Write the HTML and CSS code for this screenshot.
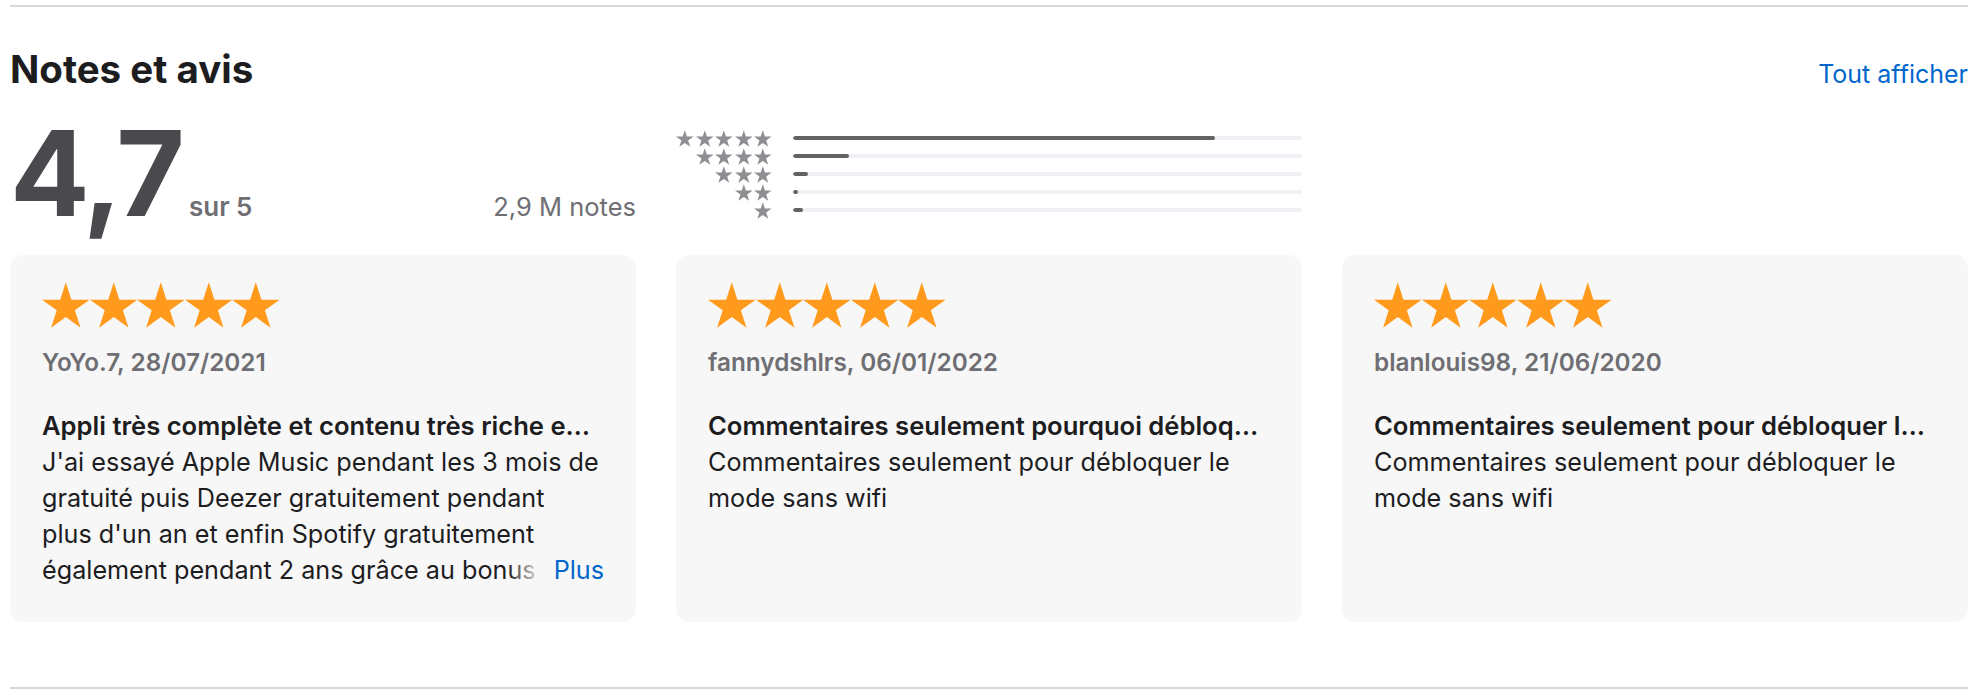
FILE: index.html
```html
<!DOCTYPE html>
<html lang="fr">
<head>
<meta charset="utf-8">
<title>Notes et avis</title>
<link rel="stylesheet" href="styles.css">
</head>
<body>
<svg class="defs" aria-hidden="true">
  <symbol id="star" viewBox="2.45 0 95.1 90.45"><polygon points="50,0 61.23,34.55 97.55,34.55 68.17,55.9 79.39,90.45 50,69.1 20.61,90.45 31.83,55.9 2.45,34.55 38.77,34.55"/></symbol>
</svg>
<section class="reviews">
  <header class="reviews-header">
    <h2 class="reviews-title">Notes et avis</h2>
    <a class="see-all" href="#">Tout afficher</a>
  </header>

  <div class="ratings">
    <div class="average">
      <span class="average-value">4,7</span>
      <span class="average-out">sur 5</span>
      <span class="average-count">2,9 M notes</span>
    </div>
    <div class="histogram">
      <div class="hist-row">
        <span class="hist-stars"><svg><use href="#star"/></svg><svg><use href="#star"/></svg><svg><use href="#star"/></svg><svg><use href="#star"/></svg><svg><use href="#star"/></svg></span>
        <span class="bar"><span class="fill" style="width:83%"></span></span>
      </div>
      <div class="hist-row">
        <span class="hist-stars"><svg><use href="#star"/></svg><svg><use href="#star"/></svg><svg><use href="#star"/></svg><svg><use href="#star"/></svg></span>
        <span class="bar"><span class="fill" style="width:11%"></span></span>
      </div>
      <div class="hist-row">
        <span class="hist-stars"><svg><use href="#star"/></svg><svg><use href="#star"/></svg><svg><use href="#star"/></svg></span>
        <span class="bar"><span class="fill" style="width:3%"></span></span>
      </div>
      <div class="hist-row">
        <span class="hist-stars"><svg><use href="#star"/></svg><svg><use href="#star"/></svg></span>
        <span class="bar"><span class="fill" style="width:1%"></span></span>
      </div>
      <div class="hist-row">
        <span class="hist-stars"><svg><use href="#star"/></svg></span>
        <span class="bar"><span class="fill" style="width:2%"></span></span>
      </div>
    </div>
  </div>

  <div class="cards">
    <article class="card">
      <div class="card-stars"><svg><use href="#star"/></svg><svg><use href="#star"/></svg><svg><use href="#star"/></svg><svg><use href="#star"/></svg><svg><use href="#star"/></svg></div>
      <div class="card-meta">YoYo.7, 28/07/2021</div>
      <h3 class="card-title">Appli très complète et contenu très riche en musique</h3>
      <p class="card-body">J'ai essayé Apple Music pendant les 3 mois de gratuité puis Deezer gratuitement pendant<br>plus d'un an et enfin Spotify gratuitement également pendant 2 ans grâce au bonus de mon opérateur.<a class="more" href="#">Plus</a></p>
    </article>
    <article class="card">
      <div class="card-stars"><svg><use href="#star"/></svg><svg><use href="#star"/></svg><svg><use href="#star"/></svg><svg><use href="#star"/></svg><svg><use href="#star"/></svg></div>
      <div class="card-meta">fannydshlrs, 06/01/2022</div>
      <h3 class="card-title">Commentaires seulement pourquoi débloquer le mode sans wifi</h3>
      <p class="card-body">Commentaires seulement pour débloquer le mode sans wifi</p>
    </article>
    <article class="card">
      <div class="card-stars"><svg><use href="#star"/></svg><svg><use href="#star"/></svg><svg><use href="#star"/></svg><svg><use href="#star"/></svg><svg><use href="#star"/></svg></div>
      <div class="card-meta">blanlouis98, 21/06/2020</div>
      <h3 class="card-title">Commentaires seulement pour débloquer le mode sans wifi</h3>
      <p class="card-body">Commentaires seulement pour débloquer le mode sans wifi</p>
    </article>
  </div>
</section>
</body>
</html>
```

FILE: styles.css
```css
* { box-sizing: border-box; }

html, body {
  margin: 0;
  background: #ffffff;
}

body {
  padding: 5px 10px 0;
  font-family: Inter, "Noto Sans", "Liberation Sans", sans-serif;
  color: #1d1d1f;
}

.defs {
  position: absolute;
  width: 0;
  height: 0;
  overflow: hidden;
}

.reviews {
  border-top: 2px solid #d8d8dc;
  border-bottom: 2px solid #d8d8dc;
  padding: 39px 0 65px;
}

.reviews-header {
  display: flex;
  justify-content: space-between;
  align-items: baseline;
}

.reviews-title {
  margin: 0;
  font-size: 38.5px;
  line-height: 46px;
  font-weight: 700;
  color: #1d1d1f;
}

.see-all {
  font-size: 25px;
  color: #0066cc;
  text-decoration: none;
}

.ratings {
  display: grid;
  grid-template-columns: repeat(3, 1fr);
  column-gap: 40px;
  margin-top: 22px;
}

.average {
  display: flex;
  align-items: baseline;
}

.average-value {
  font-size: 118px;
  line-height: 118px;
  font-weight: 700;
  color: #4a4a4e;
  letter-spacing: -0.025em;
}

.average-out {
  margin-left: 7px;
  font-size: 26px;
  font-weight: 600;
  color: #6e6e73;
}

.average-count {
  margin-left: auto;
  font-size: 25.5px;
  color: #6e6e73;
}

.histogram {
  margin-top: 15px;
  display: flex;
  flex-direction: column;
}

.hist-row {
  display: flex;
  align-items: center;
  height: 18px;
}

.hist-stars {
  width: 96px;
  display: flex;
  justify-content: flex-end;
  gap: 2px;
}

.hist-stars svg {
  width: 17.6px;
  height: 17px;
  fill: #8e8e93;
}

.bar {
  flex: 1;
  margin-left: 21px;
  height: 4px;
  border-radius: 2px;
  background: #f0f0f5;
  overflow: hidden;
}

.fill {
  display: block;
  height: 100%;
  border-radius: 2px;
  background: #636366;
}

.cards {
  display: grid;
  grid-template-columns: repeat(3, 1fr);
  column-gap: 40px;
  margin-top: 23px;
}

.card {
  min-width: 0;
  background: #f7f7f7;
  border-radius: 13px;
  padding: 27px 32px 34px;
}

.card-stars {
  display: flex;
  height: 46px;
}

.card-stars svg {
  width: 47.6px;
  height: 46px;
  fill: #ff9a1c;
}

.card-meta {
  margin-top: 18px;
  font-size: 24.3px;
  line-height: 32px;
  font-weight: 600;
  color: #6e6e73;
}

.card-title {
  margin: 30px 0 0;
  font-size: 25.6px;
  line-height: 36px;
  font-weight: 600;
  color: #1d1d1f;
  white-space: nowrap;
  overflow: hidden;
  text-overflow: ellipsis;
}

.card-body {
  position: relative;
  margin: 0;
  font-size: 25.2px;
  line-height: 36px;
  color: #1d1d1f;
  display: -webkit-box;
  -webkit-box-orient: vertical;
  -webkit-line-clamp: 4;
  overflow: hidden;
}

.more {
  position: absolute;
  right: 0;
  bottom: 0;
  padding-left: 46px;
  background: linear-gradient(to right, rgba(247, 247, 247, 0), #f7f7f7 34px);
  color: #0066cc;
  text-decoration: none;
}
```
